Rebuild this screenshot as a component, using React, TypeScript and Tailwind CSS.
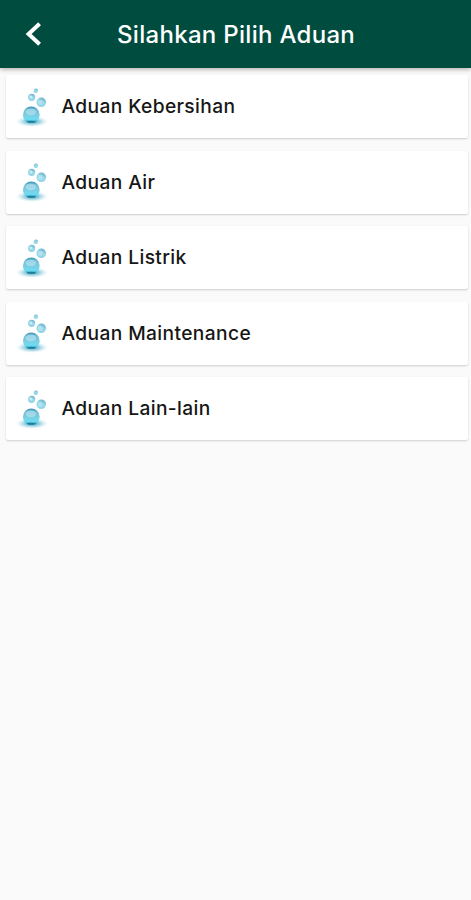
const complaints = [
  "Aduan Kebersihan",
  "Aduan Air",
  "Aduan Listrik",
  "Aduan Maintenance",
  "Aduan Lain-lain",
]

function BubbleDefs() {
  return (
    <svg width="0" height="0" className="absolute" aria-hidden="true">
      <defs>
        <linearGradient id="ball" x1="0" y1="0" x2="0" y2="1">
          <stop offset="0" stopColor="#3a93b3" />
          <stop offset="0.22" stopColor="#6fbdd7" />
          <stop offset="0.5" stopColor="#7ccbe0" />
          <stop offset="0.8" stopColor="#6fdcf2" />
          <stop offset="1" stopColor="#2b9dbb" />
        </linearGradient>
        <linearGradient id="drop" x1="0.8" y1="0" x2="0.3" y2="1">
          <stop offset="0" stopColor="#5fa9c8" />
          <stop offset="0.45" stopColor="#9bd8e8" />
          <stop offset="1" stopColor="#8ad4e6" />
        </linearGradient>
        <radialGradient id="shade">
          <stop offset="0" stopColor="#2f93b0" stopOpacity="0.95" />
          <stop offset="0.5" stopColor="#74bfd6" stopOpacity="0.65" />
          <stop offset="1" stopColor="#cdebf3" stopOpacity="0" />
        </radialGradient>
      </defs>
    </svg>
  )
}

function BubbleIcon() {
  return (
    <svg viewBox="0 0 36 42" className="h-[42px] w-9 shrink-0" aria-hidden="true">
      <ellipse cx="17" cy="35.5" rx="16.5" ry="5.5" fill="url(#shade)" />
      <path
        d="M8 28.5a8.3 8.1 0 0 1 16.6 0c0 3-1 5.100-2.800 6.500-1.300 1-3.200 1.500-5.500 1.500s-4.200-.5-5.500-1.500C9 33.600 8 31.500 8 28.500Z"
        fill="url(#ball)"
      />
      <ellipse cx="15.8" cy="25.8" rx="5.4" ry="3.4" fill="#c9edf5" opacity="0.5" />
      <ellipse cx="16.3" cy="35.8" rx="4.5" ry="1" fill="#096681" opacity="0.65" />
      <circle cx="16.6" cy="11.3" r="3.6" fill="url(#drop)" />
      <circle cx="16" cy="11" r="1.5" fill="#d5f1f7" opacity="0.8" />
      <circle cx="26.3" cy="16.3" r="4.8" fill="url(#drop)" />
      <circle cx="25.2" cy="16.5" r="2.5" fill="#c5eaf3" opacity="0.6" />
      <circle cx="20.8" cy="4.7" r="2.2" fill="url(#drop)" />
    </svg>
  )
}

export default function App() {
  return (
    <main className="min-h-[900px] bg-[#fafafa] font-[Inter,sans-serif] text-[#161616]">
      <BubbleDefs />
      <header className="relative flex h-[68px] items-center bg-[#004d40] pl-[25px] text-white shadow-[0_1px_5px_rgba(0,0,0,0.35)]">
        <button aria-label="Kembali" className="w-[92px]">
          <svg viewBox="0 0 18 26" className="h-[26px] w-[18px]" fill="none" stroke="currentColor" strokeWidth="4">
            <path d="M14.6 2.8 3.6 13l11 10.2" />
          </svg>
        </button>
        <h1 className="pt-px text-2xl font-medium tracking-[0.3px]">Silahkan Pilih Aduan</h1>
      </header>

      <ul className="flex flex-col gap-[12.6px] pt-[7px] pr-[3px] pl-[6px]">
        {complaints.map((label) => (
          <li
            key={label}
            className="flex h-[63px] items-center rounded-[2px] bg-white pl-[9px] shadow-[0_1px_2px_rgba(0,0,0,0.18)]"
          >
            <BubbleIcon />
            <span className="ml-[10.5px] text-[19.2px] font-medium tracking-[0.38px]">{label}</span>
          </li>
        ))}
      </ul>
    </main>
  )
}
